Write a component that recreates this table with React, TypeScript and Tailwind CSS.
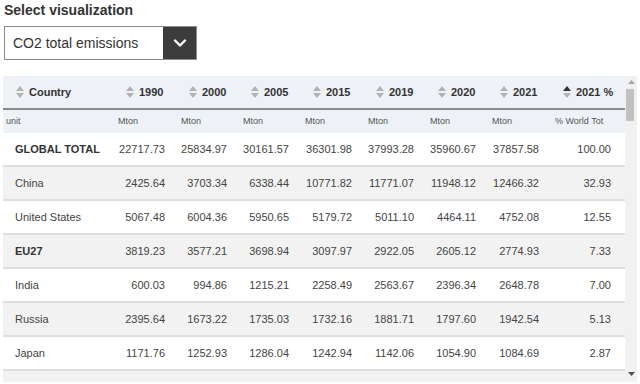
import React from "react";

const cols = [
  { key: "Country", w: "w-[113px]" },
  { key: "1990", w: "w-[63px]" },
  { key: "2000", w: "w-[62px]" },
  { key: "2005", w: "w-[62px]" },
  { key: "2015", w: "w-[63px]" },
  { key: "2019", w: "w-[62px]" },
  { key: "2020", w: "w-[62px]" },
  { key: "2021", w: "w-[63px]" },
  { key: "2021 %", w: "w-[72px]" },
];

const units = ["unit", "Mton", "Mton", "Mton", "Mton", "Mton", "Mton", "Mton", "% World Tot"];

const rows: { name: string; bold?: boolean; v: string[] }[] = [
  { name: "GLOBAL TOTAL", bold: true, v: ["22717.73", "25834.97", "30161.57", "36301.98", "37993.28", "35960.67", "37857.58", "100.00"] },
  { name: "China", v: ["2425.64", "3703.34", "6338.44", "10771.82", "11771.07", "11948.12", "12466.32", "32.93"] },
  { name: "United States", v: ["5067.48", "6004.36", "5950.65", "5179.72", "5011.10", "4464.11", "4752.08", "12.55"] },
  { name: "EU27", bold: true, v: ["3819.23", "3577.21", "3698.94", "3097.97", "2922.05", "2605.12", "2774.93", "7.33"] },
  { name: "India", v: ["600.03", "994.86", "1215.21", "2258.49", "2563.67", "2396.34", "2648.78", "7.00"] },
  { name: "Russia", v: ["2395.64", "1673.22", "1735.03", "1732.16", "1881.71", "1797.60", "1942.54", "5.13"] },
  { name: "Japan", v: ["1171.76", "1252.93", "1286.04", "1242.94", "1142.06", "1054.90", "1084.69", "2.87"] },
];

function SortIcon({ active }: { active?: boolean }) {
  return (
    <svg width="8" height="12" viewBox="0 0 8 12" className="shrink-0">
      <polygon points="4,0 8,5 0,5" fill={active ? "#333333" : "#b3b3b3"} />
      <polygon points="0,7 8,7 4,12" fill="#b3b3b3" />
    </svg>
  );
}

export default function App() {
  return (
    <div className="w-[640px] h-[384px] overflow-hidden bg-white text-[#333]" style={{ fontFamily: '"Liberation Sans", Arial, sans-serif' }}>
      <div className="pl-[4px] pt-[1px] h-[20px] text-[14px] font-bold leading-[18px] text-[#333]">Select visualization</div>
      <div className="ml-[4px] mt-[6px] flex w-[193px] h-[34px] border border-[#8c8c8c] bg-white">
        <div className="flex-1 flex items-center pl-[8px] text-[14px] text-[#333]">CO2 total emissions</div>
        <div className="w-[33px] bg-[#3c3c3c] flex items-center justify-center">
          <svg width="14" height="10" viewBox="0 0 14 10">
            <polyline points="2,2.5 7,7.5 12,2.5" fill="none" stroke="#ffffff" strokeWidth="2.4" strokeLinecap="round" strokeLinejoin="round" />
          </svg>
        </div>
      </div>
      <div className="mt-[16px] ml-[3px] flex h-[306px]">
        <div className="w-[622px] overflow-hidden text-[11px]">
          <div className="flex h-[34px] bg-[#eef2f7] border-b-2 border-[#8a8a8a]">
            {cols.map((c, i) => (
              <div key={c.key} className={`${c.w} flex items-center gap-[5px] font-bold text-[#333] ${i === 0 ? "pl-[13px]" : "pl-[10px]"}`}>
                <SortIcon active={i === 8} />
                <span>{c.key}</span>
              </div>
            ))}
          </div>
          <div className="flex h-[23px] bg-[#eef2f7] items-center text-[9px] text-[#555]">
            {units.map((u, i) => (
              <div key={i} className={`${cols[i].w} ${i === 0 ? "pl-[3px]" : "pl-[2px]"}`}>{u}</div>
            ))}
          </div>
          {rows.map((r, ri) => (
            <div key={r.name} className={`flex h-[34px] items-center border-b-2 border-[#dedede] ${ri % 2 === 1 ? "bg-[#f2f2f2]" : "bg-white"}`}>
              <div className={`${cols[0].w} pl-[12px] ${r.bold ? "font-bold text-[#333]" : "text-[#444]"}`}>{r.name}</div>
              {r.v.map((v, vi) => (
                <div key={vi} className={`${cols[vi + 1].w} text-right pr-[14px] text-[#444]`}>{v}</div>
              ))}
            </div>
          ))}
          <div className="h-[40px] bg-[#f2f2f2]" />
        </div>
        <div className="w-[12px] bg-[#f1f1f1] flex flex-col items-center">
          <svg width="7" height="4" viewBox="0 0 7 4" className="mt-[4px]">
            <polygon points="3.5,0 7,4 0,4" fill="#a3a3a3" />
          </svg>
          <div className="mt-[5px] w-[8px] h-[32px] bg-[#c1c1c1] -translate-x-[1px]" />
          <div className="flex-1" />
          <svg width="7" height="4" viewBox="0 0 7 4" className="mb-[6px]">
            <polygon points="0,0 7,0 3.5,4" fill="#505050" />
          </svg>
        </div>
      </div>
    </div>
  );
}
